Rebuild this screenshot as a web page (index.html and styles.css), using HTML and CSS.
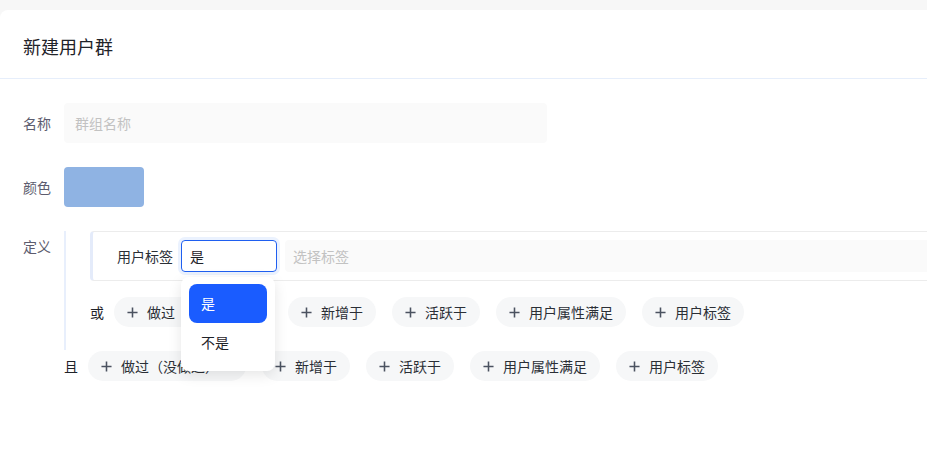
FILE: index.html
```html
<!DOCTYPE html>
<html lang="zh-CN">
<head>
    <meta charset="UTF-8">
    <meta name="viewport" content="width=device-width, initial-scale=1.0">
    <title>新建用户群</title>
    <link rel="stylesheet" href="styles.css">
</head>
<body>
    <div class="card">
        <div class="card-header">新建用户群</div>

        <div class="card-body">
            <!-- 名称 -->
            <div class="form-row">
                <div class="form-label">名称</div>
                <div class="name-input">群组名称</div>
            </div>

            <!-- 颜色 -->
            <div class="form-row">
                <div class="form-label">颜色</div>
                <div class="color-swatch"></div>
            </div>

            <!-- 定义 -->
            <div class="form-row top">
                <div class="form-label tall">定义</div>
                <div class="definition">
                    <div class="or-group">
                        <div class="condition">
                            <span class="condition-name">用户标签</span>
                            <div class="select-wrap">
                                <div class="select focused">是</div>
                                <div class="dropdown">
                                    <div class="option selected">是</div>
                                    <div class="option">不是</div>
                                </div>
                            </div>
                            <div class="tag-select">选择标签</div>
                        </div>

                        <div class="add-row">
                            <span class="joiner">或</span>
                            <div class="add-btn wide"><svg viewBox="0 0 12 12"><path d="M6 .5v11M.5 6h11"/></svg>做过（没做过）</div>
                            <div class="add-btn"><svg viewBox="0 0 12 12"><path d="M6 .5v11M.5 6h11"/></svg>新增于</div>
                            <div class="add-btn"><svg viewBox="0 0 12 12"><path d="M6 .5v11M.5 6h11"/></svg>活跃于</div>
                            <div class="add-btn"><svg viewBox="0 0 12 12"><path d="M6 .5v11M.5 6h11"/></svg>用户属性满足</div>
                            <div class="add-btn"><svg viewBox="0 0 12 12"><path d="M6 .5v11M.5 6h11"/></svg>用户标签</div>
                        </div>
                    </div>

                    <div class="add-row and-row">
                        <span class="joiner">且</span>
                        <div class="add-btn wide"><svg viewBox="0 0 12 12"><path d="M6 .5v11M.5 6h11"/></svg>做过（没做过）</div>
                        <div class="add-btn"><svg viewBox="0 0 12 12"><path d="M6 .5v11M.5 6h11"/></svg>新增于</div>
                        <div class="add-btn"><svg viewBox="0 0 12 12"><path d="M6 .5v11M.5 6h11"/></svg>活跃于</div>
                        <div class="add-btn"><svg viewBox="0 0 12 12"><path d="M6 .5v11M.5 6h11"/></svg>用户属性满足</div>
                        <div class="add-btn"><svg viewBox="0 0 12 12"><path d="M6 .5v11M.5 6h11"/></svg>用户标签</div>
                    </div>
                </div>
            </div>
        </div>
    </div>
</body>
</html>
```

FILE: styles.css
```css
body {
    margin: 0;
    padding: 0;
    background-color: #f7f7f7;
    font-family: "Noto Sans CJK SC", "Noto Sans", sans-serif;
    font-size: 14px;
    color: #2b2f36;
    overflow: hidden;
}
.card {
    margin-top: 10px;
    min-height: 461px;
    background-color: #fff;
    border-radius: 8px 0 0 0;
}
.card-header {
    height: 69px;
    box-sizing: border-box;
    padding: 22px 23px 0;
    font-size: 18px;
    line-height: 28px;
    color: #1f2329;
    border-bottom: 1px solid #e6eefb;
}
.card-body {
    padding: 24px 0 0 23px;
}
.form-row {
    display: flex;
    align-items: center;
    margin-bottom: 24px;
}
.form-row.top {
    align-items: flex-start;
}
.form-label {
    width: 41px;
    flex-shrink: 0;
    color: #5c5c6e;
}
.form-label.tall {
    line-height: 30px;
}
.name-input {
    width: 483px;
    height: 40px;
    box-sizing: border-box;
    padding: 0 11px;
    line-height: 40px;
    background-color: #fafafa;
    border-radius: 4px;
    color: #c2c2c2;
}
.color-swatch {
    width: 80px;
    height: 40px;
    background-color: #8fb3e3;
    border-radius: 4px;
}
.definition {
    flex: 1;
}
.or-group {
    border-left: 2px solid #e8effc;
    padding: 0 0 23px 24px;
}
.condition {
    display: flex;
    align-items: center;
    gap: 8px;
    width: 1000px;
    height: 50px;
    box-sizing: border-box;
    padding: 0 8px 0 24px;
    border: 1px solid #ececec;
    border-left: 3px solid #e4ebfa;
    border-radius: 4px;
}
.condition-name {
    color: #2b2f36;
}
.select-wrap {
    position: relative;
}
.select {
    width: 96px;
    height: 32px;
    box-sizing: border-box;
    padding: 0 8px;
    line-height: 30px;
    border: 1px solid #1f5ff0;
    border-radius: 4px;
    color: #1f2329;
}
.select.focused {
    box-shadow: 0 0 0 3px #ebf2fe;
}
.dropdown {
    position: absolute;
    top: 37px;
    left: 0;
    width: 94px;
    box-sizing: border-box;
    padding: 7px 8px 9px;
    background-color: #fff;
    border-radius: 8px;
    box-shadow: 0 4px 14px rgba(0, 0, 0, 0.1);
    z-index: 10;
}
.option {
    height: 39px;
    line-height: 39px;
    padding-left: 12px;
    border-radius: 8px;
    color: #1f2329;
}
.option.selected {
    background-color: #1a5cff;
    color: #fff;
}
.tag-select {
    flex: 1;
    height: 32px;
    box-sizing: border-box;
    padding: 0 8px;
    line-height: 32px;
    background-color: #fafafa;
    border-radius: 4px;
    color: #c2c2c2;
}
.add-row {
    display: flex;
    align-items: center;
    margin-top: 16px;
}
.and-row {
    margin-top: 1px;
}
.joiner {
    width: 24px;
    flex-shrink: 0;
    color: #1f2329;
}
.add-btn {
    display: flex;
    align-items: center;
    height: 30px;
    box-sizing: border-box;
    padding: 0 13px;
    margin-right: 16px;
    background-color: #f6f7f8;
    border-radius: 15px;
    white-space: nowrap;
    color: #2b2f36;
}
.add-btn.wide {
    min-width: 158px;
}
.add-btn svg {
    width: 11px;
    height: 11px;
    margin-right: 9px;
    fill: none;
    stroke: #4b5260;
    stroke-width: 1.7;
}
```
